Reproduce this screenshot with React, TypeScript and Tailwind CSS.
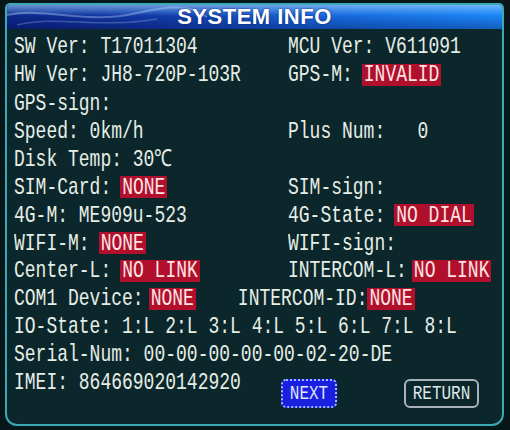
import { ReactNode } from 'react'

const mono = '[font-family:Liberation_Mono,Courier_New,monospace]'

// text in the DVR font is tall and narrow, so stretch it vertically
const T = ({ children }: { children: ReactNode }) => (
  <span className="inline-block origin-center scale-y-[1.3] whitespace-pre">{children}</span>
)

const Badge = ({ children, className = '' }: { children: ReactNode; className?: string }) => (
  <span className={`inline-flex h-[22px] items-center bg-[#b0102c] px-[2px] text-[#ffe4e4] ${className}`}>
    <T>{children}</T>
  </span>
)

const Row = ({ left, right }: { left?: ReactNode; right?: ReactNode }) => (
  <div className="grid h-[28px] grid-cols-[274px_1fr] items-center">
    <div className="flex items-center">{left}</div>
    <div className="flex items-center">{right}</div>
  </div>
)

const App = () => {
  return (
    <div className="h-[430px] w-[510px] overflow-hidden bg-[#071619] pt-[3px] pl-[5px]">
      <div
        className={`h-[423px] w-[499px] overflow-hidden rounded-t-[5px] rounded-b-[12px] border-2 border-[#3aa9b6] bg-[#0c272c] text-[18px] leading-none text-[#e6eee6] ${mono}`}
      >
        {/* header */}
        <div className="relative flex h-[24px] items-center justify-center overflow-hidden bg-[linear-gradient(to_bottom,rgba(170,215,255,0.6)_0%,rgba(120,190,255,0.3)_28%,rgba(0,0,0,0)_45%,rgba(0,0,50,0.3)_100%),linear-gradient(to_right,#0c2688_0%,#123aa8_30%,#1664d8_62%,#1a86f6_100%)]">
          <svg className="absolute left-0 top-0" width="200" height="24" viewBox="0 0 200 24">
            <path d="M0 10 C40 2, 80 20, 130 8 S 190 6, 200 12" stroke="rgba(200,225,255,0.35)" strokeWidth="2" fill="none" />
            <path d="M10 20 C50 10, 90 24, 150 14" stroke="rgba(200,225,255,0.25)" strokeWidth="1.5" fill="none" />
          </svg>
          <span className="relative [font-family:Liberation_Sans,Arial,sans-serif] text-[22px] font-bold tracking-[0.5px] text-white [text-shadow:0_0_2px_#0a1a60]">
            SYSTEM INFO
          </span>
        </div>

        <div className="pl-[7px] pt-[4px]">
          <Row left={<T>SW Ver: T17011304</T>} right={<T>MCU Ver: V611091</T>} />
          <Row
            left={<T>HW Ver: JH8-720P-103R</T>}
            right={
              <>
                <T>GPS-M:</T>
                <Badge className="ml-[9px]">INVALID</Badge>
              </>
            }
          />
          <Row left={<T>GPS-sign:</T>} />
          <Row left={<T>Speed: 0km/h</T>} right={<T>Plus Num:   0</T>} />
          <Row left={<T>Disk Temp: 30℃</T>} />
          <Row
            left={
              <>
                <T>SIM-Card:</T>
                <Badge className="ml-[9px]">NONE</Badge>
              </>
            }
            right={<T>SIM-sign:</T>}
          />
          <Row
            left={<T>4G-M: ME909u-523</T>}
            right={
              <>
                <T>4G-State:</T>
                <Badge className="ml-[9px]">NO DIAL</Badge>
              </>
            }
          />
          <Row
            left={
              <>
                <T>WIFI-M:</T>
                <Badge className="ml-[9px]">NONE</Badge>
              </>
            }
            right={<T>WIFI-sign:</T>}
          />
          <Row
            left={
              <>
                <T>Center-L:</T>
                <Badge className="ml-[9px]">NO LINK</Badge>
              </>
            }
            right={
              <>
                <T>INTERCOM-L:</T>
                <Badge className="ml-[5px]">NO LINK</Badge>
              </>
            }
          />
          <div className="flex h-[28px] items-center">
            <T>COM1 Device:</T>
            <Badge className="ml-[5px]">NONE</Badge>
            <span className="ml-[42px]">
              <T>INTERCOM-ID:</T>
            </span>
            <Badge>NONE</Badge>
          </div>
          <div className="flex h-[28px] items-center">
            <T>IO-State: 1:L 2:L 3:L 4:L 5:L 6:L 7:L 8:L</T>
          </div>
          <div className="flex h-[28px] items-center">
            <T>Serial-Num: 00-00-00-00-00-02-20-DE</T>
          </div>
          <div className="flex items-start">
            <div className="flex h-[28px] w-[267px] items-center">
              <T>IMEI: 864669020142920</T>
            </div>
            <button className="mt-[10px] flex h-[29px] w-[56px] items-center justify-center rounded-[5px] border-2 border-dotted border-[#9db8ff] bg-[#1a1fe0] text-[16px] text-[#dfe6ff]">
              <T>NEXT</T>
            </button>
            <button className="ml-[67px] mt-[10px] flex h-[29px] w-[75px] items-center justify-center rounded-[6px] border-2 border-[#a9b3ba] bg-[#0c272c] text-[16px] text-[#dfe8e8]">
              <T>RETURN</T>
            </button>
          </div>
        </div>
      </div>
    </div>
  )
}

export default App
